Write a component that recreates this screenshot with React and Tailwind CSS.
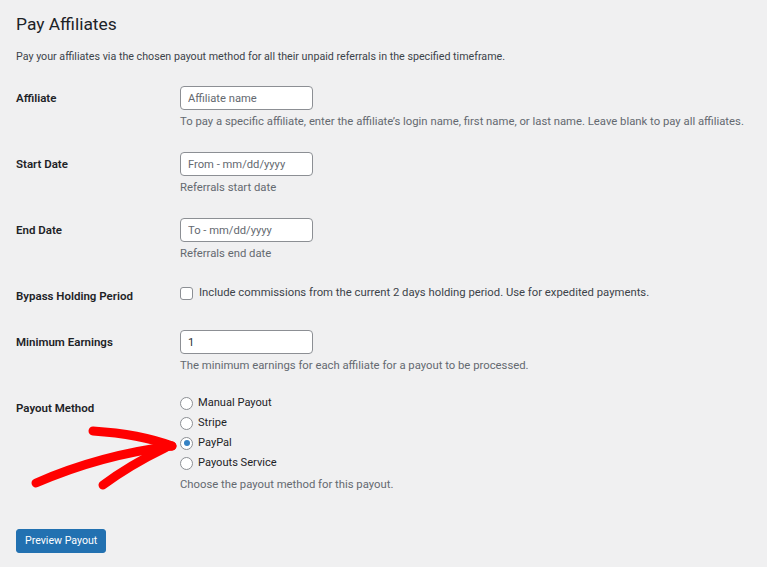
import React from 'react';

const Row = ({ label, height, children }) => (
  <div className={`grid grid-cols-[164px_1fr] ${height}`}>
    <div className="pt-[13px] text-[11.5px] leading-[18px] font-semibold text-[#1d2327]">{label}</div>
    <div className="pt-[10px]">{children}</div>
  </div>
);

const TextInput = ({ placeholder, value }) => (
  <input
    type="text"
    placeholder={placeholder}
    defaultValue={value}
    className="block w-[133px] h-[24px] px-[7px] bg-white border border-[#8c8f94] rounded-[4px] text-[11.2px] text-[#2c3338] placeholder:text-[#646970] outline-none"
  />
);

const Desc = ({ children }) => (
  <p className="mt-[3px] text-[11.3px] leading-[18px] text-[#646970] whitespace-nowrap">{children}</p>
);

const Radio = ({ label, checked }) => (
  <label className="h-[20px] flex items-center gap-[5px] text-[11.1px] text-[#1d2327]">
    <span className="w-[13px] h-[13px] rounded-full border border-[#8c8f94] bg-white flex items-center justify-center">
      {checked && <span className="w-[6px] h-[6px] rounded-full bg-[#3582c4]" />}
    </span>
    {label}
  </label>
);

export default function App() {
  return (
    <div className="relative min-h-screen bg-[#f0f0f1] px-4 pt-[12px] font-['Roboto',sans-serif] text-[#1d2327]">
      <h1 className="text-[17.4px] leading-[24px] font-normal text-[#1d2327]">Pay Affiliates</h1>
      <p className="mt-[12px] text-[10.7px] leading-[18px] text-[#3c434a]">
        Pay your affiliates via the chosen payout method for all their unpaid referrals in the specified timeframe.
      </p>

      <div className="mt-[10px]">
        <Row label="Affiliate" height="h-[66px]">
          <TextInput placeholder="Affiliate name" />
          <Desc>To pay a specific affiliate, enter the affiliate’s login name, first name, or last name. Leave blank to pay all affiliates.</Desc>
        </Row>
        <Row label="Start Date" height="h-[66px]">
          <TextInput placeholder="From - mm/dd/yyyy" />
          <Desc>Referrals start date</Desc>
        </Row>
        <Row label="End Date" height="h-[66px]">
          <TextInput placeholder="To - mm/dd/yyyy" />
          <Desc>Referrals end date</Desc>
        </Row>
        <Row label="Bypass Holding Period" height="h-[46px]">
          <label className="h-[18px] flex items-center gap-[6px] text-[11.3px] text-[#3c434a] whitespace-nowrap">
            <span className="w-[13px] h-[13px] rounded-[3px] border border-[#8c8f94] bg-white shrink-0" />
            Include commissions from the current 2 days holding period. Use for expedited payments.
          </label>
        </Row>
        <Row label="Minimum Earnings" height="h-[66px]">
          <TextInput value="1" />
          <Desc>The minimum earnings for each affiliate for a payout to be processed.</Desc>
        </Row>
        <div className="grid grid-cols-[164px_1fr]">
          <div className="pt-[13px] text-[11.5px] leading-[18px] font-semibold text-[#1d2327]">Payout Method</div>
          <div className="pt-[7px]">
            <Radio label="Manual Payout" />
            <Radio label="Stripe" />
            <Radio label="PayPal" checked />
            <Radio label="Payouts Service" />
            <Desc>Choose the payout method for this payout.</Desc>
          </div>
        </div>
      </div>

      <button className="mt-[35px] h-[24px] px-[8px] rounded-[3px] bg-[#2271b1] text-white text-[10.6px] leading-[22px] border border-[#2271b1]">
        Preview Payout
      </button>

      <svg className="absolute left-0 top-0 pointer-events-none" width="767" height="567" viewBox="0 0 767 567" fill="none">
        <g stroke="#ff0000" strokeWidth="9" strokeLinecap="round" strokeLinejoin="round">
          <path d="M36 483 Q 100 455 172 446" />
          <path d="M93 431 Q 140 434 172 446" />
          <path d="M103 485 Q 130 465 165 448" />
        </g>
      </svg>
    </div>
  );
}
